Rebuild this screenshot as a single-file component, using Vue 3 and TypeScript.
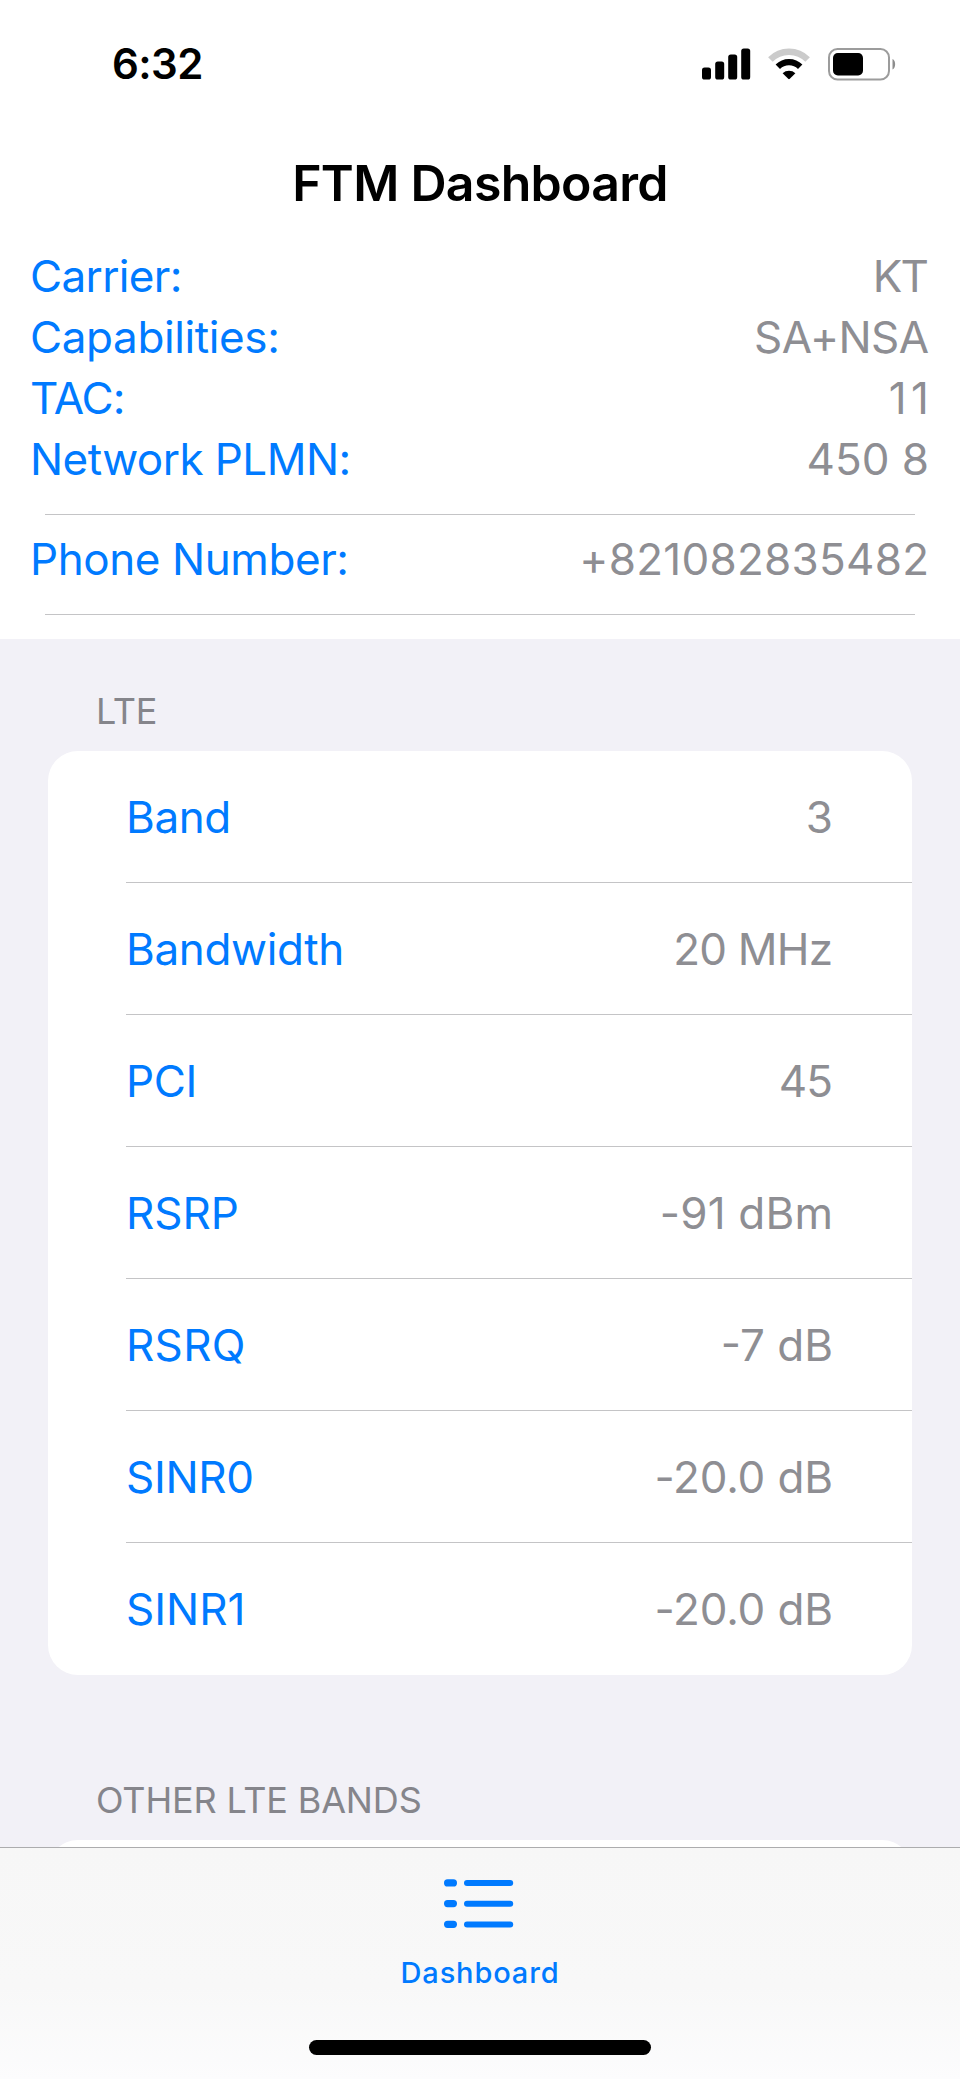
<script setup lang="ts">
interface Field {
  label: string
  value: string
  // letter-spacing in px: [label, value]
  track: [number, number]
}

const device: Field[] = [
  { label: 'Carrier:', value: 'KT', track: [-0.65, -1.6] },
  { label: 'Capabilities:', value: 'SA+NSA', track: [-0.38, -0.6] },
  { label: 'TAC:', value: '11', track: [-1, 4.4] },
  { label: 'Network PLMN:', value: '450 8', track: [-0.55, 0] },
]

const phone: Field = { label: 'Phone Number:', value: '+821082835482', track: [-0.42, 0.26] }

const lte: Field[] = [
  { label: 'Band', value: '3', track: [-0.4, 0] },
  { label: 'Bandwidth', value: '20 MHz', track: [-0.35, -0.8] },
  { label: 'PCI', value: '45', track: [-0.4, -1] },
  { label: 'RSRP', value: '-91 dBm', track: [0, 0.2] },
  { label: 'RSRQ', value: '-7 dB', track: [0.3, 0] },
  { label: 'SINR0', value: '-20.0 dB', track: [-0.3, -0.15] },
  { label: 'SINR1', value: '-20.0 dB', track: [0, -0.15] },
]

// The negative margin keeps the last glyph on the text edge.
const tracking = (t: number) => ({ letterSpacing: `${t}px`, marginRight: `${-t}px` })
</script>

<template>
  <div class="screen">
    <header class="top">
      <div class="status">
        <span class="clock">6:32</span>
        <svg class="indicators" width="196" height="34" viewBox="0 0 196 34">
          <rect x="0" y="19.5" width="9" height="12" rx="2.6" />
          <rect x="13.2" y="13.5" width="9" height="18" rx="2.6" />
          <rect x="26.2" y="6.5" width="9" height="25" rx="2.6" />
          <rect x="39.2" y="0.5" width="9" height="31" rx="2.6" />
          <path d="M68.4 11.6 A26 26 0 0 1 105.6 11.6" fill="none" stroke="#cbcbcb" stroke-width="6.4" />
          <path d="M75.8 18.8 A15.8 15.8 0 0 1 98.2 18.8" fill="none" stroke="#000" stroke-width="6.2" />
          <path d="M80.6 25.2 A9.6 9.6 0 0 1 93.4 25.2 L87.8 30.8 Q87 31.6 86.2 30.8 Z" />
          <rect x="127" y="1" width="60" height="30.5" rx="8.5" fill="none" stroke="#9c9c9c" stroke-width="2" />
          <rect x="131" y="5" width="30" height="22.5" rx="4.8" />
          <path d="M190.5 11 C194 12.5 194 20 190.5 21.5 Z" fill="#8d8d8d" />
        </svg>
      </div>
      <h1 class="title">FTM Dashboard</h1>
      <div v-for="f in device" :key="f.label" class="info">
        <span class="label" :style="tracking(f.track[0])">{{ f.label }}</span>
        <span class="value" :style="tracking(f.track[1])">{{ f.value }}</span>
      </div>
      <hr class="rule first" />
      <div class="info phone">
        <span class="label" :style="tracking(phone.track[0])">{{ phone.label }}</span>
        <span class="value" :style="tracking(phone.track[1])">{{ phone.value }}</span>
      </div>
      <hr class="rule" />
    </header>

    <main class="content">
      <h2 class="heading">LTE</h2>
      <section class="card">
        <div v-for="f in lte" :key="f.label" class="row">
          <span class="label" :style="tracking(f.track[0])">{{ f.label }}</span>
          <span class="value" :style="tracking(f.track[1])">{{ f.value }}</span>
        </div>
      </section>
      <h2 class="heading other">OTHER LTE BANDS</h2>
      <section class="card next"></section>
    </main>

    <nav class="tabs">
      <svg class="list" width="70" height="50" viewBox="0 0 70 50">
        <g v-for="i in 3" :key="i" :transform="`translate(0 ${(i - 1) * 20.7})`">
          <rect x="0" y="0.3" width="13" height="7.2" rx="3.6" />
          <rect x="20" y="1" width="49.2" height="6" rx="3" />
        </g>
      </svg>
      <span class="tab">Dashboard</span>
      <div class="home"></div>
    </nav>
  </div>
</template>

<style>
body {
  margin: 0;
}
</style>

<style scoped>
.screen {
  width: 960px;
  height: 2079px;
  overflow: hidden;
  display: flex;
  flex-direction: column;
  background: #f2f1f7;
  font-family: Inter, "Liberation Sans", sans-serif;
  font-size: 44px;
}
.top {
  height: 639px;
  flex: none;
  background: #fff;
}
.status {
  display: flex;
  justify-content: space-between;
  align-items: center;
  box-sizing: border-box;
  height: 128px;
  padding: 0 62px 0 112px;
}
.clock {
  margin-top: -2px;
  font-size: 42px;
  font-weight: 600;
  letter-spacing: -0.6px;
}
.indicators {
  margin-top: 1px;
}
.title {
  margin: 0;
  height: 118px;
  line-height: 111px;
  text-align: center;
  font-size: 50px;
  font-weight: 600;
  letter-spacing: -0.7px;
}
.info {
  display: flex;
  justify-content: space-between;
  height: 61px;
  line-height: 61px;
  padding: 0 31px 0 30px;
}
.label {
  color: #007aff;
}
.value {
  color: #8e8e93;
}
.rule {
  height: 1px;
  margin: 0 45px;
  border: 0;
  background: #c4c4c6;
}
.first {
  margin-top: 24px;
}
.phone {
  height: 85px;
  padding-top: 14px;
}
.content {
  flex: none;
  height: 1208px;
  overflow: hidden;
}
.heading {
  margin: 0;
  height: 112px;
  padding: 52px 96px 0;
  box-sizing: border-box;
  font-size: 36px;
  font-weight: 400;
  line-height: 40px;
  letter-spacing: -0.15px;
  color: #85858b;
}
.card {
  margin: 0 48px;
  padding-left: 78px;
  border-radius: 30px;
  background: #fff;
}
.row {
  display: flex;
  justify-content: space-between;
  height: 132px;
  line-height: 132px;
  padding-right: 79px;
  box-sizing: border-box;
}
.row:not(:last-child) {
  box-shadow: inset 0 -1px #c4c4c6;
}
.other {
  height: 165px;
  padding-top: 105px;
}
.next {
  height: 132px;
}
.tabs {
  flex: 1;
  display: flex;
  flex-direction: column;
  align-items: center;
  border-top: 1px solid #acacae;
  background: linear-gradient(#f7f7f7, #f8f8f8 60%, #fcfcfd);
}
.list {
  margin: 31px 2px 0 0;
  fill: #007aff;
}
.tab {
  margin-top: 20px;
  line-height: 48px;
  font-size: 29px;
  font-weight: 500;
  letter-spacing: 0.85px;
  color: #007aff;
}
.home {
  width: 342px;
  height: 15px;
  margin-top: 43px;
  border-radius: 8px;
  background: #000;
}
</style>
